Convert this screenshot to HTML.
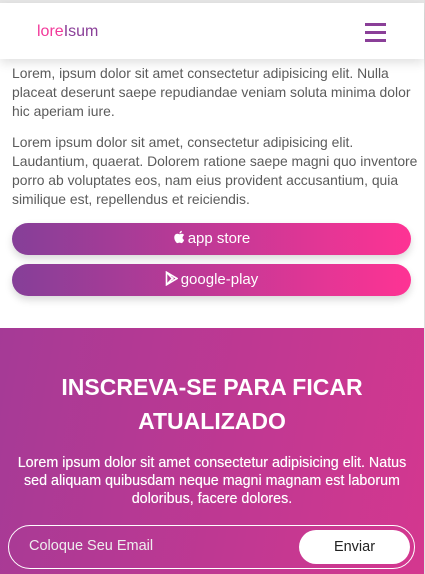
<!DOCTYPE html>
<html><head><meta charset="utf-8"><style>
*{margin:0;padding:0;box-sizing:border-box}
body{width:425px;height:574px;overflow:hidden;background:#fff;font-family:"Liberation Sans",sans-serif;position:relative}
.topline{position:absolute;left:0;top:0;width:425px;height:3px;background:#e6e6e6}
.rline{position:absolute;right:0;top:0;width:1px;height:574px;background:#e0e0e0}
header{position:absolute;left:0;top:3px;width:424px;height:56px;background:#fff;box-shadow:0 4px 10px rgba(0,0,0,.12);z-index:2}
.logo{position:absolute;left:37px;top:20px;font-size:16px;color:#8a3f98}
.logo span{color:#f2399a}
.burger{position:absolute;left:365px;top:20px;width:21px}
.burger i{display:block;height:3px;background:#8a3f98;margin-bottom:5px}
p.t{position:absolute;left:12px;font-size:13.9px;line-height:19px;color:#5b5b5b;white-space:nowrap}
.btn{position:absolute;left:12px;width:399px;height:32px;border-radius:16px;background:linear-gradient(90deg,#853f98,#fe3394);color:#fff;font-size:15px;text-align:center;line-height:32px;box-shadow:0 4px 8px rgba(0,0,0,.15)}
.sec{position:absolute;left:0;top:328px;width:424px;height:246px;background:linear-gradient(100deg,#a53a96,#d4378f)}
h2{position:absolute;left:0;width:424px;text-align:center;color:#fff;font-size:23px;font-weight:bold;line-height:34px;top:42px}
.sp{position:absolute;top:126px;left:0;width:424px;text-align:center;color:#fff;font-size:14.3px;line-height:18px;white-space:nowrap;text-shadow:0 0 .4px #fff}
.inp{position:absolute;left:8px;top:197px;width:407px;height:44px;border:1px solid #fff;border-radius:22px}
.inp span{position:absolute;left:20px;top:12px;color:#eee;font-size:14.5px}
.env{position:absolute;left:290px;top:4px;width:111px;height:34px;background:#fff;border-radius:17px;color:#222;font-size:14.5px;text-align:center;line-height:34px}
</style></head><body>
<div class="topline"></div><div class="rline"></div>
<header><div class="logo"><span>lore</span>Isum</div><div class="burger"><i></i><i></i><i></i></div></header>
<p class="t" style="top:64px">Lorem, ipsum dolor sit amet consectetur adipisicing elit. Nulla<br>placeat deserunt saepe repudiandae veniam soluta minima dolor<br>hic aperiam iure.</p>
<p class="t" style="top:133px">Lorem ipsum dolor sit amet, consectetur adipisicing elit.<br>Laudantium, quaerat. Dolorem ratione saepe magni quo inventore<br>porro ab voluptates eos, nam eius provident accusantium, quia<br>similique est, repellendus et reiciendis.</p>
<div class="btn" style="top:223px"><svg width="12" height="14" viewBox="0 0 12 14" style="vertical-align:-1px;margin-right:3px"><path fill="#fff" d="M9.8 7.4c0-1.6 1.3-2.3 1.4-2.4-.8-1.1-1.9-1.3-2.3-1.3-1-.1-1.9.6-2.4.6s-1.3-.6-2.1-.5C3.3 3.8 2.3 4.4 1.8 5.3.7 7.2 1.5 10 2.6 11.5c.5.8 1.1 1.6 1.9 1.6.8 0 1-.5 2-.5s1.2.5 2 .5 1.3-.8 1.8-1.5c.6-.8.8-1.6.8-1.7 0 0-1.6-.6-1.6-2.5zM8.3 2.6c.4-.5.7-1.2.6-1.9-.6 0-1.3.4-1.8.9-.4.4-.7 1.1-.6 1.8.7.1 1.4-.3 1.8-.8z"/></svg>app store</div>
<div class="btn" style="top:264px"><svg width="13" height="15" viewBox="0 0 13 15" style="vertical-align:-2px;margin-right:3px"><path fill="none" stroke="#fff" stroke-width="1.6" d="M1.5 1.2v12.6l10.6-6.3z M1.5 1.2l6.8 7.3 M1.5 13.8l6.8-7.3"/></svg>google-play</div>
<div class="sec">
<h2>INSCREVA-SE PARA FICAR<br>ATUALIZADO</h2>
<div class="sp">Lorem ipsum dolor sit amet consectetur adipisicing elit. Natus<br>sed aliquam quibusdam neque magni magnam est laborum<br>doloribus, facere dolores.</div>
<div class="inp"><span>Coloque Seu Email</span><div class="env">Enviar</div></div>
</div>
</body></html>
